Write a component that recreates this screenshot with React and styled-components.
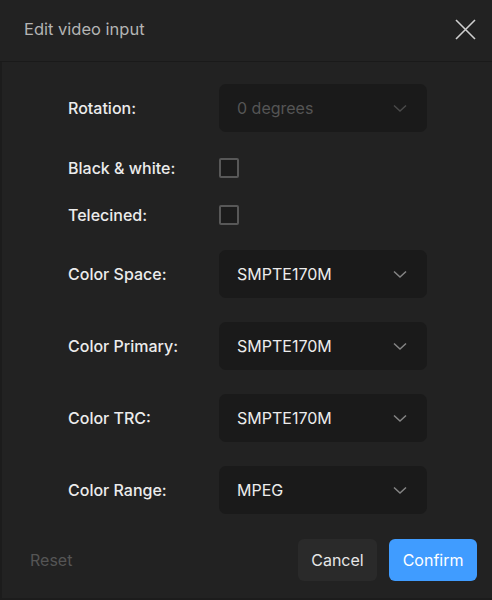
import React, { useState } from "react";
import styled, { createGlobalStyle } from "styled-components";

const Global = createGlobalStyle`
  html, body {
    margin: 0;
    padding: 0;
    background: #222222;
  }
  * { box-sizing: border-box; }
  body {
    font-family: Inter, "Noto Sans", sans-serif;
  }
`;

const Dialog = styled.div`
  width: 492px;
  height: 600px;
  background: #222222;
  display: flex;
  flex-direction: column;
`;

const Header = styled.div`
  height: 62px;
  display: flex;
  align-items: center;
  justify-content: space-between;
  padding: 0 14px 3px 24px;
  border-bottom: 1px solid #1a1a1a;
`;

const Title = styled.h2`
  margin: 0;
  font-size: 16.5px;
  font-weight: 400;
  color: #b4b4b4;
`;

const CloseBtn = styled.button`
  all: unset;
  width: 26px;
  height: 26px;
  display: flex;
  align-items: center;
  justify-content: center;
  cursor: pointer;
  color: #cfcfcf;
`;

const Body = styled.div`
  flex: 1;
  display: flex;
  flex-direction: column;
  border-left: 2px solid #1c1c1c;
  border-bottom: 2px solid #1c1c1c;
`;

const Form = styled.div`
  display: grid;
  grid-template-columns: 151px 208px;
  grid-auto-rows: auto;
  row-gap: 24px;
  align-items: center;
  padding: 22px 0 0 66px;
`;

const Label = styled.label`
  font-size: 16px;
  font-weight: 500;
  color: #ececec;
`;

const SelectBox = styled.div`
  height: 48px;
  border-radius: 7px;
  background: #1a1a1a;
  display: flex;
  align-items: center;
  justify-content: space-between;
  padding: 0 18px 0 18px;
  font-size: 16px;
  color: ${(p) => (p.disabled ? "#555555" : "#ececec")};
  cursor: ${(p) => (p.disabled ? "default" : "pointer")};
`;

const Chevron = styled.svg`
  width: 18px;
  height: 18px;
  color: ${(p) => (p.disabled ? "#4a4a4a" : "#858585")};
`;

const CheckCell = styled.div`
  height: 23px;
  display: flex;
  align-items: center;
`;

const Checkbox = styled.button`
  all: unset;
  box-sizing: border-box;
  width: 20px;
  height: 20px;
  border: 2px solid #585858;
  border-radius: 2px;
  background: #1c1c1c;
  cursor: pointer;
  display: flex;
  align-items: center;
  justify-content: center;
  color: #fff;
`;

const Footer = styled.div`
  margin-top: auto;
  display: flex;
  align-items: center;
  padding: 0 15px 17px 28px;
`;

const ResetBtn = styled.button`
  all: unset;
  font-size: 16px;
  color: #555555;
  cursor: pointer;
  margin-right: auto;
`;

const Button = styled.button`
  all: unset;
  box-sizing: border-box;
  height: 42px;
  padding: 0 13.5px;
  border-radius: 6px;
  font-size: 16px;
  background: ${(p) => (p.primary ? "#409cff" : "#2a2a2a")};
  color: ${(p) => (p.primary ? "#ffffff" : "#e6e6e6")};
  cursor: pointer;
  display: flex;
  align-items: center;
  margin-left: ${(p) => (p.primary ? "12px" : "0")};
`;

const ChevronIcon = ({ disabled }) => (
  <Chevron disabled={disabled} viewBox="0 0 18 18" fill="none">
    <path d="M3 6.5 L9 12 L15 6.5" stroke="currentColor" strokeWidth="1.5" />
  </Chevron>
);

const Select = ({ value, disabled }) => (
  <SelectBox disabled={disabled}>
    <span>{value}</span>
    <ChevronIcon disabled={disabled} />
  </SelectBox>
);

const Check = ({ checked, onClick }) => (
  <CheckCell>
    <Checkbox onClick={onClick}>
      {checked && (
        <svg width="12" height="12" viewBox="0 0 14 14" fill="none">
          <path d="M2 7l3.5 3.5L12 3.5" stroke="currentColor" strokeWidth="2" />
        </svg>
      )}
    </Checkbox>
  </CheckCell>
);

const selects = [
  { label: "Color Space:", value: "SMPTE170M" },
  { label: "Color Primary:", value: "SMPTE170M" },
  { label: "Color TRC:", value: "SMPTE170M" },
  { label: "Color Range:", value: "MPEG" },
];

export default function App() {
  const [bw, setBw] = useState(false);
  const [tc, setTc] = useState(false);

  return (
    <>
      <Global />
      <Dialog>
        <Header>
          <Title>Edit video input</Title>
          <CloseBtn title="Close">
            <svg width="21" height="21" viewBox="0 0 21 21" fill="none">
              <path d="M1 1 L20 20 M20 1 L1 20" stroke="currentColor" strokeWidth="1.6" />
            </svg>
          </CloseBtn>
        </Header>
        <Body>
          <Form>
            <Label>Rotation:</Label>
            <Select value="0 degrees" disabled />
            <Label>Black &amp; white:</Label>
            <Check checked={bw} onClick={() => setBw(!bw)} />
            <Label>Telecined:</Label>
            <Check checked={tc} onClick={() => setTc(!tc)} />
            {selects.map((s) => (
              <React.Fragment key={s.label}>
                <Label>{s.label}</Label>
                <Select value={s.value} />
              </React.Fragment>
            ))}
          </Form>
          <Footer>
            <ResetBtn>Reset</ResetBtn>
            <Button>Cancel</Button>
            <Button primary>Confirm</Button>
          </Footer>
        </Body>
      </Dialog>
    </>
  );
}
